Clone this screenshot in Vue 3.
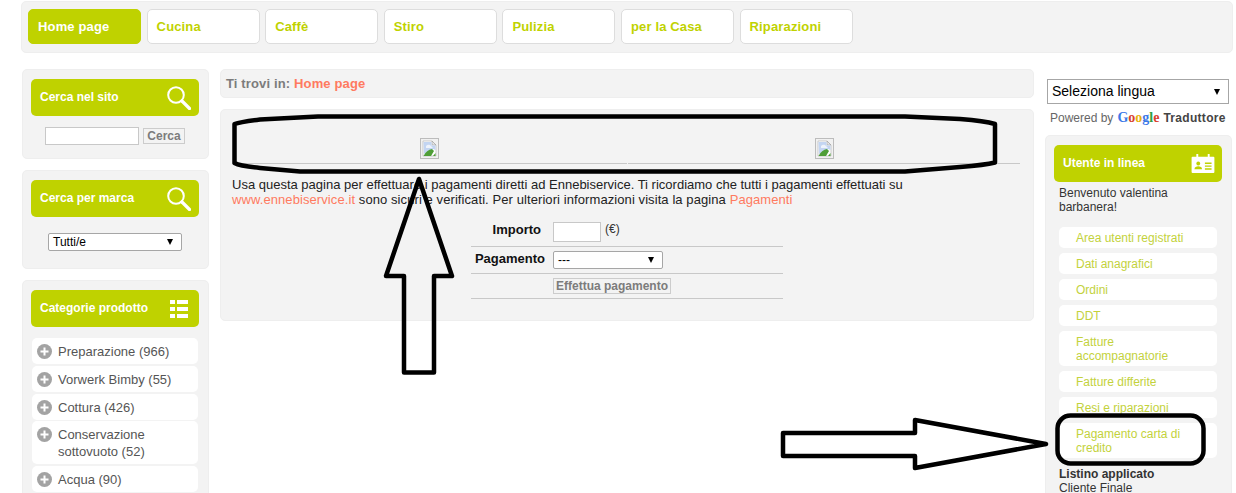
<template>
  <div class="page">
    <!-- menu principale -->
    <nav class="top-menu">
      <a v-for="(item, i) in menu" :key="item" class="tab" :class="{ active: i === 0 }">{{ item }}</a>
    </nav>

    <div class="columns">
      <!-- colonna sinistra -->
      <aside class="left">
        <section class="panel search-panel">
          <div class="panel-head">
            <span>Cerca nel sito</span>
            <svg class="head-icon" viewBox="0 0 24 24" fill="none" stroke="#fff">
              <circle cx="9" cy="9" r="7.800" stroke-width="2" />
              <path d="M15 15l7.500 7.500" stroke-width="3.200" stroke-linecap="round" />
            </svg>
          </div>
          <div class="search-row">
            <input class="text-input search-input" type="text" />
            <button class="flat-btn">Cerca</button>
          </div>
        </section>

        <section class="panel brand-panel">
          <div class="panel-head">
            <span>Cerca per marca</span>
            <svg class="head-icon" viewBox="0 0 24 24" fill="none" stroke="#fff">
              <circle cx="9" cy="9" r="7.800" stroke-width="2" />
              <path d="M15 15l7.500 7.500" stroke-width="3.200" stroke-linecap="round" />
            </svg>
          </div>
          <div class="brand-row">
            <div class="fake-select brand-select">Tutti/e<i class="caret"></i></div>
          </div>
        </section>

        <section class="panel cat-panel">
          <div class="panel-head">
            <span>Categorie prodotto</span>
            <svg class="list-icon" viewBox="0 0 18 18" fill="#fff">
              <rect x="0" y="0" width="5" height="4" />
              <rect x="7" y="0" width="11" height="4" />
              <rect x="0" y="7" width="5" height="4" />
              <rect x="7" y="7" width="11" height="4" />
              <rect x="0" y="14" width="5" height="4" />
              <rect x="7" y="14" width="11" height="4" />
            </svg>
          </div>
          <ul class="cat-list">
            <li v-for="cat in categories" :key="cat">
              <svg class="plus" viewBox="0 0 15 15">
                <circle cx="7.500" cy="7.500" r="7.500" fill="#a3a3a3" />
                <path d="M7.500 3.500v8M3.500 7.500h8" stroke="#fff" stroke-width="2" />
              </svg>
              <span>{{ cat }}</span>
            </li>
          </ul>
        </section>
      </aside>

      <!-- colonna centrale -->
      <main class="center">
        <div class="panel breadcrumb">Ti trovi in: <a class="link">Home page</a></div>
        <section class="panel content">
          <div class="cards">
            <div v-for="n in 2" :key="n" class="card-cell">
              <svg class="broken" viewBox="0 0 19 21">
                <rect x="0.500" y="0.500" width="18" height="20" fill="#f1f1f1" stroke="#bcbcbc" />
                <path d="M3 3h9l4 4v11H3z" fill="#fff" stroke="#b9b9b9" stroke-width="0.700" />
                <path d="M12 3v4h4z" fill="#e8e8e8" stroke="#9a9a9a" stroke-width="0.600" />
                <path d="M3.500 4h8v3.500h4V12L13 11l-9 5z" fill="#c3d5f2" />
                <path d="M6 8c2-2 4-1 5 0l2 2H6z" fill="#eef3fb" />
                <path d="M3.500 18c2-4 5-6.500 8.500-7l2 2-3 5z" fill="#4f9e37" />
                <path d="M13 18l2.500-3V18z" fill="#4f9e37" />
              </svg>
            </div>
          </div>
          <p class="intro">
            Usa questa pagina per effettuare i pagamenti diretti ad Ennebiservice. Ti ricordiamo che tutti i pagamenti effettuati su
            <span class="intro-tail"><a class="link">www.ennebiservice.it</a> sono sicuri e verificati. Per ulteriori informazioni visita la pagina <a class="link">Pagamenti</a></span>
          </p>
          <div class="pay-form">
            <div class="pay-row amount-row">
              <label>Importo</label>
              <div class="pay-field">
                <input class="text-input amount-input" type="text" />
                <span class="euro">(€)</span>
              </div>
            </div>
            <div class="pay-row method-row">
              <label>Pagamento</label>
              <div class="pay-field">
                <div class="fake-select method-select">---<i class="caret"></i></div>
              </div>
            </div>
            <div class="pay-row submit-row">
              <label></label>
              <div class="pay-field">
                <button class="flat-btn">Effettua pagamento</button>
              </div>
            </div>
          </div>
        </section>
      </main>

      <!-- colonna destra -->
      <aside class="right">
        <div class="fake-select lang-select">Seleziona lingua<i class="caret"></i></div>
        <div class="powered">
          <span>Powered by</span>
          <span class="google"><b class="g-blue">G</b><b class="g-red">o</b><b class="g-yellow">o</b><b class="g-blue">g</b><b class="g-green">l</b><b class="g-red">e</b></span>
          <strong>Traduttore</strong>
        </div>
        <section class="panel user-panel">
          <div class="panel-head">
            <span>Utente in linea</span>
            <svg class="card-icon" viewBox="0 0 24 20">
              <path d="M1 3h4V0h2v3h10V0h2v3h4a1 1 0 0 1 1 1v15a1 1 0 0 1-1 1H1a1 1 0 0 1-1-1V4a1 1 0 0 1 1-1z" fill="#fff" />
              <circle cx="7" cy="10" r="2" fill="#bfd200" />
              <path d="M3 16c0-2 2-3 4-3s4 1 4 3z" fill="#bfd200" />
              <path d="M14 9h7v1.500h-7zM14 12h7v1.500h-7zM14 15h7v1.500h-7z" fill="#bfd200" />
            </svg>
          </div>
          <p class="welcome">Benvenuto valentina barbanera!</p>
          <ul class="user-list">
            <li v-for="link in userLinks" :key="link">{{ link }}</li>
          </ul>
          <div class="price-list">
            <strong>Listino applicato</strong>
            <span>Cliente Finale</span>
          </div>
        </section>
      </aside>
    </div>

    <!-- segni disegnati sopra lo screenshot -->
    <svg class="marks" viewBox="0 0 1236 493" fill="none" stroke="#000" stroke-width="4.500" stroke-linejoin="round">
      <path d="M234.500 124 Q240 122 260 119.500 L318 116.500 H905 L960 119 Q985 121 995 124 V162.500 Q985 165 960 167 L905 171.500 H300 L260 168 Q240 166 234.500 163 Z" />
      <path d="M419 179 L452 276 H434 V372.500 H404 V276 H386 Z" />
      <path d="M783 433 H915 V420 L1046 444 L915 468 V456 H783 Z" />
      <rect x="1057.500" y="415.500" width="146" height="48" rx="13" />
    </svg>
  </div>
</template>

<script setup>
const menu = ['Home page', 'Cucina', 'Caffè', 'Stiro', 'Pulizia', 'per la Casa', 'Riparazioni']

const categories = [
  'Preparazione (966)',
  'Vorwerk Bimby (55)',
  'Cottura (426)',
  'Conservazione sottovuoto (52)',
  'Acqua (90)'
]

const userLinks = [
  'Area utenti registrati',
  'Dati anagrafici',
  'Ordini',
  'DDT',
  'Fatture accompagnatorie',
  'Fatture differite',
  'Resi e riparazioni',
  'Pagamento carta di credito'
]
</script>

<style>
html, body {
  margin: 0;
  overflow: hidden;
  background: #fff;
}
</style>

<style scoped>
.page {
  position: relative;
  height: 493px;
  overflow: hidden;
  padding: 1px 3px 0 21px;
  box-sizing: border-box;
  font-family: "Liberation Sans", Arial, sans-serif;
  font-size: 12px;
  color: #333;
}

.panel {
  background: #f3f3f3;
  border: 1px solid #eeeeee;
  border-radius: 5px;
  box-sizing: border-box;
}

.top-menu {
  display: flex;
  gap: 5.600px;
  height: 52px;
  padding: 7px 6px;
  box-sizing: border-box;
  background: #f3f3f3;
  border: 1px solid #eeeeee;
  border-radius: 5px;
}

.tab {
  width: 113px;
  height: 35px;
  padding-left: 9px;
  box-sizing: border-box;
  border: 1px solid #dddddd;
  border-radius: 5px;
  background: #fff;
  color: #bfd200;
  font-size: 13px;
  font-weight: bold;
  line-height: 33px;
  letter-spacing: 0.150px;
}

.tab.active {
  background: #bfd200;
  border-color: #bfd200;
  color: #fff;
}

.columns {
  display: grid;
  grid-template-columns: 187px 814px 187px;
  column-gap: 11px;
  margin: 16px 0 0 1px;
  align-items: start;
}

.left {
  display: flex;
  flex-direction: column;
  gap: 11px;
}

.panel-head {
  display: flex;
  align-items: center;
  justify-content: space-between;
  height: 37px;
  margin: 9px 9px 0 8px;
  padding: 0 8px 0 9px;
  border-radius: 5px;
  background: #bfd200;
  color: #fff;
  font-size: 12px;
  font-weight: bold;
}

.panel-head span {
  margin-bottom: 2px;
}

.head-icon {
  width: 24px;
  height: 24px;
}

.list-icon {
  width: 18px;
  height: 18px;
  margin-right: 3px;
}

.card-icon {
  width: 24px;
  height: 19px;
  margin-right: -1px;
}

.search-panel {
  height: 90px;
}

.search-row {
  display: flex;
  align-items: center;
  justify-content: center;
  gap: 4px;
  margin: 11px 1px 0 0;
}

.text-input {
  border: 1px solid #c8c8c8;
  background: #fff;
  box-sizing: border-box;
  padding: 0;
  outline: none;
}

.search-input {
  width: 94px;
  height: 18px;
}

.flat-btn {
  padding: 0 3px;
  height: 16px;
  border: 1px solid #cccccc;
  background: #f3f3f3;
  color: #7c7c7c;
  font-family: inherit;
  font-size: 12px;
  font-weight: bold;
  line-height: 14px;
}

.fake-select {
  position: relative;
  box-sizing: border-box;
  border: 1px solid #a6a6a6;
  border-radius: 2px;
  background: #fff;
  color: #000;
  white-space: nowrap;
}

.caret {
  position: absolute;
  top: 50%;
  right: 8px;
  margin-top: -3px;
  border-left: 3.500px solid transparent;
  border-right: 3.500px solid transparent;
  border-top: 6px solid #000;
}

.brand-panel {
  height: 99px;
}

.brand-row {
  display: flex;
  justify-content: center;
  margin: 16px 1px 0 0;
}

.brand-select {
  width: 134px;
  height: 18px;
  padding-left: 4px;
  font-size: 12px;
  line-height: 16px;
}

.cat-panel {
  height: 240px;
}

.cat-list,
.user-list {
  list-style: none;
  margin: 0;
  padding: 0;
}

.cat-list {
  margin: 11px 10px 0 9px;
  display: flex;
  flex-direction: column;
  gap: 1.800px;
}

.cat-list li {
  display: flex;
  gap: 6px;
  padding: 5px 10px 4px 5px;
  border-radius: 5px;
  background: #fff;
  font-size: 13px;
  line-height: 17px;
  color: #555;
}

.plus {
  width: 15px;
  height: 15px;
  flex: none;
  margin-top: 1px;
}

.center {
  display: flex;
  flex-direction: column;
  gap: 11px;
}

.breadcrumb {
  height: 29px;
  padding-left: 5px;
  color: #7c7c7c;
  font-size: 13px;
  font-weight: bold;
  line-height: 28px;
  letter-spacing: 0.140px;
}

.link {
  color: #ff7a60;
}

.content {
  height: 212px;
  padding: 0 11px;
}

.cards {
  display: grid;
  grid-template-columns: 395px 392px;
  column-gap: 1px;
  height: 54px;
}

.card-cell {
  display: flex;
  align-items: flex-end;
  justify-content: center;
  padding-bottom: 4px;
  border-bottom: 1px solid #c8c8c8;
}

.broken {
  width: 19px;
  height: 21px;
}

.intro {
  margin: 13px 0 0;
  font-size: 13px;
  line-height: 15px;
  color: #222;
}

.intro-tail {
  letter-spacing: 0.085px;
}

.pay-form {
  width: 312px;
  margin: 14px 0 0 239px;
}

.pay-row {
  display: flex;
  box-sizing: border-box;
  border-bottom: 1px solid #c8c8c8;
}

.pay-row label {
  width: 74px;
  margin-right: 8px;
  flex: none;
  text-align: right;
  color: #111;
  font-size: 13px;
  font-weight: bold;
}

.amount-row {
  height: 26px;
  padding-top: 1px;
}

.amount-row label {
  padding-right: 4px;
  width: 70px;
  line-height: 16px;
}

.method-row {
  height: 27px;
  padding-top: 4px;
}

.submit-row {
  height: 25px;
  padding-top: 4px;
}

.submit-row .flat-btn {
  padding: 0 2px;
}

.amount-input {
  width: 48px;
  height: 20px;
  vertical-align: top;
}

.euro {
  margin-left: 4px;
  line-height: 14px;
  vertical-align: top;
}

.method-select {
  width: 110px;
  height: 18px;
  padding-left: 4px;
  line-height: 16px;
}

.right {
  display: flex;
  flex-direction: column;
  margin-left: 1px;
}

.lang-select {
  width: 182px;
  height: 25px;
  margin: 10px 0 0 1px;
  padding-left: 4px;
  font-size: 14px;
  line-height: 23px;
  border-radius: 0;
}

.powered {
  display: flex;
  gap: 4px;
  margin: 5px 0 0 4px;
  height: 17px;
  line-height: 18px;
  color: #666;
  white-space: nowrap;
}

.powered strong {
  color: #444;
  letter-spacing: 0.300px;
}

.google b {
  font-family: "Liberation Serif", serif;
  font-size: 14px;
}

.g-blue { color: #3b78e7; }
.g-red { color: #d9412f; }
.g-yellow { color: #e9b10c; }
.g-green { color: #2f9e44; }

.user-panel {
  height: 380px;
  margin: 9px 0 0 -1px;
}

.welcome {
  margin: 4px 10px 0 13px;
  line-height: 14px;
}

.user-list {
  margin: 13px 14px 0 13px;
  display: flex;
  flex-direction: column;
  gap: 5px;
}

.user-list li {
  padding: 4px 17px 3px 17px;
  border-radius: 5px;
  background: #fff;
  color: #c3d23c;
  line-height: 14px;
}

.price-list {
  display: flex;
  flex-direction: column;
  margin: 9px 0 0 13px;
  line-height: 14px;
}

.marks {
  position: absolute;
  inset: 0;
  width: 1236px;
  height: 493px;
  pointer-events: none;
}
</style>
